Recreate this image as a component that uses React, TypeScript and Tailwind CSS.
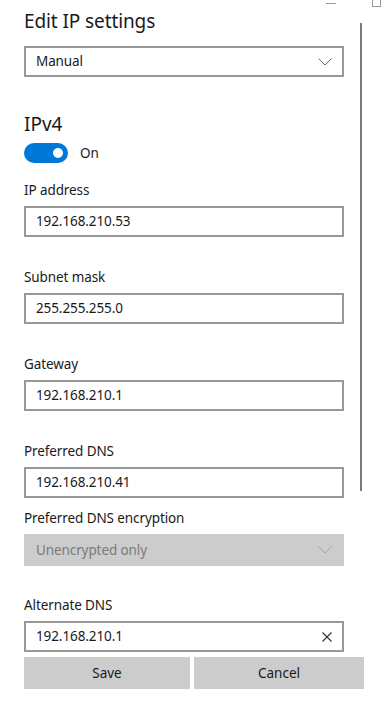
import React from "react";

const font = { fontFamily: '"Segoe UI", "Noto Sans", "Open Sans", sans-serif' };

function Chevron({ color = "#666" }: { color?: string }) {
  return (
    <svg width="14" height="8" viewBox="0 0 14 8" fill="none">
      <path d="M0.5 0.5 L7 7 L13.5 0.5" stroke={color} strokeWidth="1" />
    </svg>
  );
}

function Label({ children, mt }: { children: React.ReactNode; mt: string }) {
  return <div className={`${mt} h-[20px] text-[13.5px] leading-[20px] tracking-[-0.1px] text-[#1a1a1a]`}>{children}</div>;
}

function Field({ value, clear }: { value: string; clear?: boolean }) {
  return (
    <div className="mt-[6px] w-[320px] h-[31px] border-2 border-[#999999] bg-white flex items-center pl-[10px] pr-[10px] text-[13.5px] tracking-[-0.1px] text-[#1a1a1a]">
      <span className="flex-1">{value}</span>
      {clear && (
        <svg width="10" height="10" viewBox="0 0 10 10">
          <path d="M0.5 0.5 L9.5 9.5 M9.5 0.5 L0.5 9.5" stroke="#333" strokeWidth="1.1" />
        </svg>
      )}
    </div>
  );
}

export default function App() {
  return (
    <div className="relative w-[388px] h-[704px] bg-white overflow-hidden" style={font}>
      {/* title bar controls */}
      <div className="absolute left-[326px] top-[3px] w-[10px] h-[1px] bg-[#999]" />
      <div className="absolute left-[372px] top-[-2px] w-[9px] h-[9px] border border-[#999]" />
      {/* scrollbar */}
      <div className="absolute left-[360px] top-[23px] w-[2px] h-[468px] bg-[#7a7a7a]" />

      <div className="pl-[24px] flex flex-col">
        <div className="mt-[7px] h-[28px] text-[19px] leading-[28px] tracking-[-0.1px] text-[#1a1a1a]">Edit IP settings</div>
        <div className="mt-[11px] w-[320px] h-[31px] border-2 border-[#999999] flex items-center justify-between pl-[10px] pr-[10px] text-[13.5px] tracking-[-0.1px] text-[#1a1a1a]">
          <span>Manual</span>
          <Chevron />
        </div>

        <div className="mt-[33px] h-[28px] text-[19px] leading-[28px] text-[#1a1a1a]">IPv4</div>
        <div className="mt-[5px] flex items-center h-[20px]">
          <div className="w-[44px] h-[20px] rounded-full bg-[#0078d7] flex items-center justify-end pr-[5px]">
            <div className="w-[10px] h-[10px] rounded-full bg-white" />
          </div>
          <span className="ml-[12px] text-[13.5px] text-[#1a1a1a]">On</span>
        </div>

        <Label mt="mt-[17px]">IP address</Label>
        <Field value="192.168.210.53" />

        <Label mt="mt-[30px]">Subnet mask</Label>
        <Field value="255.255.255.0" />

        <Label mt="mt-[30px]">Gateway</Label>
        <Field value="192.168.210.1" />

        <Label mt="mt-[30px]">Preferred DNS</Label>
        <Field value="192.168.210.41" />

        <Label mt="mt-[10px]">Preferred DNS encryption</Label>
        <div className="mt-[6px] w-[320px] h-[32px] bg-[#cccccc] flex items-center justify-between pl-[12px] pr-[12px] text-[13.5px] tracking-[-0.1px] text-[#7a7a7a]">
          <span>Unencrypted only</span>
          <Chevron color="#a6a6a6" />
        </div>

        <Label mt="mt-[29px]">Alternate DNS</Label>
        <Field value="192.168.210.1" clear />

        <div className="mt-[5px] flex gap-[4px]">
          <div className="w-[166px] h-[32px] bg-[#cccccc] flex items-center justify-center text-[13.5px] text-[#1a1a1a]">Save</div>
          <div className="w-[170px] h-[32px] bg-[#cccccc] flex items-center justify-center text-[13.5px] text-[#1a1a1a]">Cancel</div>
        </div>
      </div>
    </div>
  );
}
